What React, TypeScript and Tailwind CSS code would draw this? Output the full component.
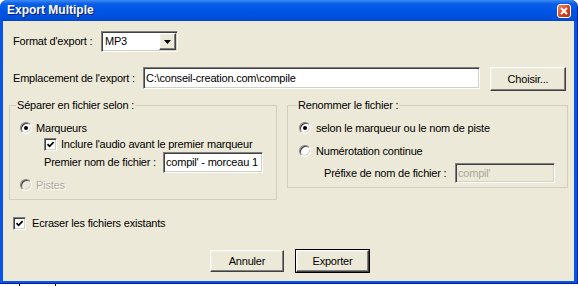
const sunken =
  "border border-t-[#808080] border-l-[#808080] border-b-white border-r-white shadow-[inset_1px_1px_0_#404040,inset_-1px_-1px_0_#d4d0c8]";
const raised =
  "border border-t-white border-l-white border-b-[#404040] border-r-[#404040] shadow-[inset_-1px_-1px_0_#808080,inset_1px_1px_0_#f1efe2] bg-[#ece9d8]";

function Radio({ checked, disabled }: { checked?: boolean; disabled?: boolean }) {
  return (
    <span
      className={`flex items-center justify-center size-[12px] shrink-0 rounded-full ${sunken} ${
        disabled ? "bg-[#ece9d8]" : "bg-white"
      }`}
    >
      {checked && <span className="size-[4px] rounded-full bg-black" />}
    </span>
  );
}

function Checkbox() {
  return (
    <span className={`flex items-center justify-center size-[13px] shrink-0 bg-white ${sunken}`}>
      <svg width="9" height="9" viewBox="0 0 9 9">
        <path d="M1.5 4.2 L3.6 6.3 L7.6 2.2" fill="none" stroke="#000" strokeWidth="1.7" />
      </svg>
    </span>
  );
}

function TitleBar() {
  return (
    <div className="h-[21px] shrink-0 flex items-center justify-between pl-[7px] pr-[6px] bg-[linear-gradient(#3d8bf5_0%,#0a5fe8_18%,#0055e5_50%,#0050dc_85%,#0046d0_100%)]">
      <span className="text-white font-bold text-[12px] tracking-normal [text-shadow:1px_1px_0_#0a1a6a]">
        Export Multiple
      </span>
      <span className="flex items-center justify-center size-[14px] rounded-[3px] border border-white bg-[linear-gradient(135deg,#ec8a6c,#d5431f_55%,#b8300f)]">
        <svg width="8" height="8" viewBox="0 0 8 8">
          <path d="M1 1 L7 7 M7 1 L1 7" stroke="#fff" strokeWidth="2" />
        </svg>
      </span>
    </div>
  );
}

export default function App() {
  return (
    <div className="w-[578px] h-[286px] bg-white flex flex-col font-['Liberation_Sans',Arial,sans-serif] text-[11px] leading-[13px] tracking-[-0.2px] text-black">
      <div className="h-[284px] shrink-0 flex flex-col rounded-t-[7px] overflow-hidden bg-[#0754e6] border-r border-b border-[#0020a0]">
        <TitleBar />
        <div className="flex-1 flex flex-col ml-[3px] mr-[3px] mb-[2px] bg-[#ece9d8] pl-[6px] pr-[6px]">
          {/* format */}
          <div className="mt-[10px] ml-[4px] h-[21px] flex items-center">
            <span className="w-[88px]">Format d'export :</span>
            <div className={`w-[77px] h-[21px] bg-white flex items-center justify-between ${sunken}`}>
              <span className="pl-[3px]">MP3</span>
              <span className={`w-[17px] h-[17px] mr-[1px] flex items-center justify-center ${raised}`}>
                <svg width="7" height="4" viewBox="0 0 7 4">
                  <path d="M0 0 H7 L3.5 4 Z" fill="#000" />
                </svg>
              </span>
            </div>
          </div>

          {/* emplacement */}
          <div className="mt-[15px] ml-[4px] h-[24px] flex items-start">
            <span className="w-[130px] mt-[5px]">Emplacement de l'export :</span>
            <div className={`w-[337px] h-[22px] bg-white flex items-center pl-[2px] ${sunken}`}>
              C:\conseil-creation.com\compile
            </div>
            <button className={`ml-[10px] w-[76px] h-[24px] flex items-center justify-center ${raised}`}>
              Choisir...
            </button>
          </div>

          {/* groups */}
          <div className="mt-[8px] flex items-start">
            <fieldset className="w-[268px] border border-[#d0d0bf] pt-[8px] pb-[6px]">
              <legend className="ml-[6px] px-[1px]">Séparer en fichier selon :</legend>
              <div className="h-[16px] flex items-center gap-[4px] pl-[10px]">
                <Radio checked />
                <span>Marqueurs</span>
              </div>
              <div className="h-[16px] flex items-center gap-[4px] pl-[34px]">
                <Checkbox />
                <span>Inclure l'audio avant le premier marqueur</span>
              </div>
              <div className="h-[21px] flex items-center pl-[34px]">
                <span className="w-[119px]">Premier nom de fichier :</span>
                <div className={`w-[100px] h-[21px] bg-white flex items-center pl-[2px] ${sunken}`}>
                  compil' - morceau 1
                </div>
              </div>
              <div className="mt-[4px] h-[16px] flex items-center gap-[4px] pl-[10px]">
                <Radio disabled />
                <span className="text-[#aca899] [text-shadow:1px_1px_0_#fff]">Pistes</span>
              </div>
            </fieldset>

            <fieldset className="ml-[10px] w-[281px] border border-[#d0d0bf] pt-[8px] pb-[4px]">
              <legend className="ml-[9px] px-[1px]">Renommer le fichier :</legend>
              <div className="h-[16px] flex items-center gap-[5px] pl-[11px]">
                <Radio checked />
                <span>selon le marqueur ou le nom de piste</span>
              </div>
              <div className="mt-[7px] h-[16px] flex items-center gap-[5px] pl-[11px]">
                <Radio />
                <span>Numérotation continue</span>
              </div>
              <div className="mt-[4px] h-[20px] flex items-center pl-[36px]">
                <span className="w-[131px]">Préfixe de nom de fichier :</span>
                <div className={`w-[100px] h-[20px] bg-[#ece9d8] text-[#aca899] flex items-center pl-[2px] ${sunken}`}>
                  compil'
                </div>
              </div>
            </fieldset>
          </div>

          {/* ecraser */}
          <div className="mt-[17px] ml-[4px] h-[13px] flex items-center gap-[6px]">
            <Checkbox />
            <span>Ecraser les fichiers existants</span>
          </div>

          {/* buttons */}
          <div className="mt-[19px] ml-[201px] h-[24px] flex items-center gap-[11px]">
            <button className={`w-[74px] h-[22px] flex items-center justify-center ${raised}`}>Annuler</button>
            <div className="w-[75px] h-[24px] border border-black flex">
              <button className={`flex-1 flex items-center justify-center ${raised}`}>Exporter</button>
            </div>
          </div>
        </div>
      </div>
      <div className="flex-1 flex">
        <div className="ml-[19px] w-[37px] border-l border-r border-black" />
      </div>
    </div>
  );
}
